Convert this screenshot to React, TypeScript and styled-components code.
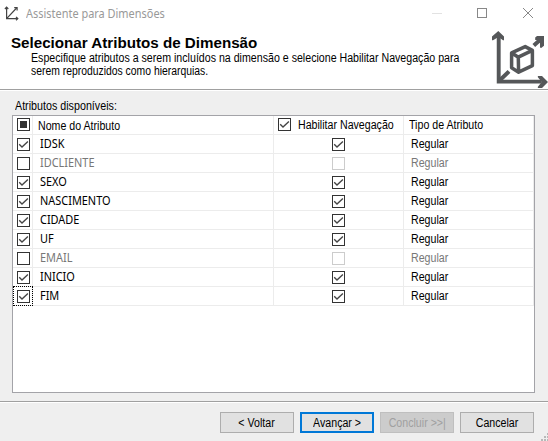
import React from "react";
import styled, { createGlobalStyle, css } from "styled-components";

const GlobalStyle = createGlobalStyle`
  html, body { margin: 0; padding: 0; background: #efefef; overflow: hidden; }
  *, *::before, *::after { box-sizing: border-box; }
`;

const Dialog = styled.main`
  position: relative;
  width: 548px;
  height: 441px;
  display: flex;
  flex-direction: column;
  background: #efefef;
  color: #000;
  font: 12px/14px "Liberation Sans", Arial, sans-serif;
  white-space: nowrap;
`;

/* Condensed dialog lettering */
const Label = styled.span<{ $center?: boolean; $scale?: number }>`
  display: block;
  transform: scaleX(${({ $scale = 0.886 }) => $scale});
  transform-origin: ${({ $center }) => ($center ? "center" : "left")};
`;

const TitleBar = styled.header`
  display: flex;
  align-items: center;
  height: 28px;
  padding-left: 4px;
  background: #fff;
`;

const WindowTitle = styled.h1`
  flex: 1;
  margin: 0 0 0 6px;
  font: 400 12px/16px "Noto Sans", sans-serif;
  color: #999;
  transform: scaleX(0.912);
  transform-origin: left;
`;

const WindowButtons = styled.div`
  display: flex;
  width: 137px;
  height: 28px;
`;

const Banner = styled.section`
  display: flex;
  justify-content: space-between;
  height: 63px;
  background: #fff;
  border-bottom: 1px solid #fff;
  box-shadow: inset 0 -1px #a0a0a0;
`;

const BannerText = styled.div`
  width: 480px;
  padding: 8px 0 0 11px;
`;

const Heading = styled.h2`
  margin: 0;
  font: 700 14px/15px "Liberation Sans", Arial, sans-serif;
  transform: scaleX(1.083);
  transform-origin: left;
`;

const Description = styled.div`
  padding: 1px 0 0 20px;
  line-height: 13px;
`;

const Content = styled.section`
  flex: 1;
  padding: 8px 13px 0 12px;
`;

const FieldLabel = styled.div`
  height: 16px;
  padding-left: 3px;
`;

const Grid = styled.div`
  width: 523px;
  height: 278px;
  border: 1px solid #a3a3a8;
  background: #fff;
`;

const Row = styled.div<{ $muted?: boolean }>`
  display: grid;
  grid-template-columns: 20px 241px 130px 130px;
  height: 19px;
  color: ${({ $muted }) => ($muted ? "#777" : "#000")};
`;

const Cell = styled.div<{ $indent?: number; $drop?: number; $focus?: boolean }>`
  display: flex;
  align-items: flex-start;
  padding: ${({ $drop = 3 }) => $drop}px 0 0 ${({ $indent = 4 }) => $indent}px;
  border-right: 1px solid #ececec;
  border-bottom: 1px solid #ececec;
  ${({ $focus }) =>
    $focus &&
    css`
      position: relative;
      &::after {
        content: "";
        position: absolute;
        inset: -1px -1px -1px 0;
        border: 1px dotted #000;
      }
    `}
`;

const CheckLabel = styled.div`
  display: flex;
  gap: 7px;
`;

const Name = styled.span`
  font: 12px/14px "Noto Sans", sans-serif;
  transform: scaleX(0.91);
  transform-origin: left;
`;

const Footer = styled.footer`
  display: flex;
  justify-content: flex-end;
  gap: 6px;
  height: 40px;
  padding: 10px 14px 0 0;
  border-top: 1px solid #a0a0a0;
  box-shadow: inset 0 1px #fff;
`;

const Button = styled.button<{ $primary?: boolean }>`
  display: flex;
  align-items: center;
  justify-content: center;
  width: 74px;
  height: 21px;
  padding: 0;
  border: ${({ $primary }) => ($primary ? "2px solid #0078d7" : "1px solid #adadad")};
  background: #e1e1e1;
  color: #000;
  font: inherit;
  &:disabled {
    background: #ccc;
    border-color: #bfbfbf;
    color: #a0a0a0;
  }
`;

const Grip = styled.svg`
  position: absolute;
  right: 0;
  bottom: 0;
`;

type CheckState = "on" | "off" | "mixed" | "disabled";

function CheckBox({ state }: { state: CheckState }) {
  return (
    <svg width="13" height="13" viewBox="0 0 13 13">
      <rect x=".5" y=".5" width="12" height="12" fill="#fff" stroke={state === "disabled" ? "#ccc" : "#333"} />
      {state === "on" && <path d="M2.2 6.3 5 9.1 10.9 3.4" fill="none" stroke="#444" strokeWidth="1.35" />}
      {state === "mixed" && <rect x="3" y="3" width="7" height="7" fill="#333" />}
    </svg>
  );
}

function AxesIcon() {
  return (
    <svg width="16" height="16" viewBox="0 0 16 16" fill="none" stroke="#444" strokeWidth="1.2">
      <path d="M2.6 1.5v11.1H13.5M2.6 12.6 12.6 2" />
      <path d="m.9 3 1.7-1.9L4.3 3M12 10.9l1.8 1.7-1.8 1.7M10.2 1.6h2.9v2.9" />
    </svg>
  );
}

function DimensionIcon() {
  return (
    <svg width="60" height="62" viewBox="0 0 60 62" fill="none" stroke="#555759">
      <path d="M10.7 7v46.6h43" strokeWidth="3.9" />
      <path d="m10.3 3 5.7 5.5v3.7h-1L10.5 9 5 12.2H4V8.5ZM60 53.9 54 60h-4l-.3-1 4-5-4-5 .3-1h4Z" fill="#555759" stroke="none" />
      <path d="M11 53 21 43.4M45.8 17.4 53 11" strokeWidth="4" />
      <path d="M47.2 9.5 49 8h7v9.7L53.2 20l-1.2-.6v-4.1l-3.2-3.3h-1.6Z" fill="#555759" stroke="none" />
      <path d="M23.6 24.8 37.2 18.6l7.2 3.8v15.2l-13.8 6.6-7-4.4ZM23.6 24.8l6.7 4.4 14.1-6.8M30.3 29.2l.3 15" strokeWidth="3.5" strokeLinejoin="round" />
    </svg>
  );
}

const attributes = [
  { name: "IDSK" },
  { name: "IDCLIENTE", off: true },
  { name: "SEXO" },
  { name: "NASCIMENTO" },
  { name: "CIDADE" },
  { name: "UF" },
  { name: "EMAIL", off: true },
  { name: "INICIO" },
  { name: "FIM", focus: true },
];

export default function App() {
  return (
    <>
      <GlobalStyle />
      <Dialog>
        <TitleBar>
          <AxesIcon />
          <WindowTitle>Assistente para Dimensões</WindowTitle>
          <WindowButtons>
            <svg width="137" height="28" viewBox="0 0 137 28" fill="none">
              <path d="M21 13.5h10" stroke="#e2e2e2" />
              <rect x="66.5" y="8.5" width="9" height="9" stroke="#888" />
              <path d="m112 8 10 10m0-10-10 10" stroke="#888" />
            </svg>
          </WindowButtons>
        </TitleBar>
        <Banner>
          <BannerText>
            <Heading>Selecionar Atributos de Dimensão</Heading>
            <Description>
              <Label>Especifique atributos a serem incluídos na dimensão e selecione Habilitar Navegação para</Label>
              <Label $scale={0.865}>serem reproduzidos como hierarquias.</Label>
            </Description>
          </BannerText>
          <DimensionIcon />
        </Banner>
        <Content>
          <FieldLabel><Label $scale={0.893}>Atributos disponíveis:</Label></FieldLabel>
          <Grid>
            <Row>
              <Cell $drop={2}><CheckBox state="mixed" /></Cell>
              <Cell $indent={5} $drop={3}><Label>Nome do Atributo</Label></Cell>
              <Cell $drop={2}>
                <CheckLabel><CheckBox state="on" /><Label>Habilitar Navegação</Label></CheckLabel>
              </Cell>
              <Cell $indent={5} $drop={2}><Label>Tipo de Atributo</Label></Cell>
            </Row>
            {attributes.map((a) => (
              <Row key={a.name} $muted={a.off}>
                <Cell $focus={a.focus}><CheckBox state={a.off ? "off" : "on"} /></Cell>
                <Cell $indent={7} $drop={2}><Name>{a.name}</Name></Cell>
                <Cell $indent={58}><CheckBox state={a.off ? "disabled" : "on"} /></Cell>
                <Cell $indent={7} $drop={2}><Label>Regular</Label></Cell>
              </Row>
            ))}
          </Grid>
        </Content>
        <Footer>
          <Button><Label $center>&lt; Voltar</Label></Button>
          <Button $primary><Label $center>Avançar &gt;</Label></Button>
          <Button disabled><Label $center>Concluir &gt;&gt;|</Label></Button>
          <Button><Label $center>Cancelar</Label></Button>
        </Footer>
        <Grip width="8" height="8" viewBox="0 0 8 8" fill="#b8b8b8">
          <path d="M1 6h2v2H1zM4 6h2v2H4zM4 3h2v2H4zM7 6h1v2H7zM7 3h1v2H7zM7 0h1v2H7z" />
        </Grip>
      </Dialog>
    </>
  );
}
